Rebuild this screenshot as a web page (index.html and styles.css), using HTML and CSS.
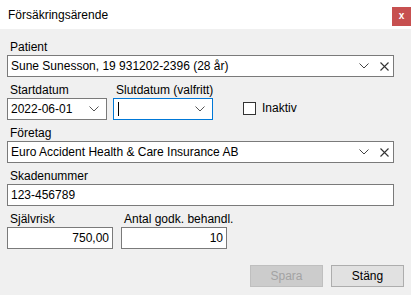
FILE: index.html
```html
<!DOCTYPE html>
<html lang="sv">

<head>
    <meta charset="UTF-8">
    <title>Försäkringsärende</title>
    <link rel="stylesheet" href="styles.css">
</head>

<body>
    <div class="window">
        <div class="titlebar">
            <span class="title">Försäkringsärende</span>
            <div class="close">x</div>
        </div>

        <div class="form">
            <div class="field">
                <label>Patient</label>
                <div class="box combo">
                    <span class="value">Sune Sunesson, 19 931202-2396 (28 år)</span>
                    <svg class="chev" width="10" height="6" viewBox="0 0 10 6"><path d="M0.5 0.5 L5 5 L9.5 0.5" fill="none" stroke="#444" stroke-width="1"/></svg>
                    <svg class="clear" width="9" height="9" viewBox="0 0 9 9"><path d="M0.5 0.5 L8.5 8.5 M8.5 0.5 L0.5 8.5" fill="none" stroke="#333" stroke-width="1.1"/></svg>
                </div>
            </div>

            <div class="row">
                <div class="field date">
                    <label>Startdatum</label>
                    <div class="box combo">
                        <span class="value">2022-06-01</span>
                        <svg class="chev" width="10" height="6" viewBox="0 0 10 6"><path d="M0.5 0.5 L5 5 L9.5 0.5" fill="none" stroke="#555" stroke-width="1"/></svg>
                    </div>
                </div>
                <div class="field date">
                    <label>Slutdatum (valfritt)</label>
                    <div class="box combo focus">
                        <span class="value"><span class="caret"></span></span>
                        <svg class="chev" width="10" height="6" viewBox="0 0 10 6"><path d="M0.5 0.5 L5 5 L9.5 0.5" fill="none" stroke="#555" stroke-width="1"/></svg>
                    </div>
                </div>
                <div class="check">
                    <span class="checkbox"></span>
                    <span>Inaktiv</span>
                </div>
            </div>

            <div class="field">
                <label>Företag</label>
                <div class="box combo">
                    <span class="value">Euro Accident Health &amp; Care Insurance AB</span>
                    <svg class="chev" width="10" height="6" viewBox="0 0 10 6"><path d="M0.5 0.5 L5 5 L9.5 0.5" fill="none" stroke="#444" stroke-width="1"/></svg>
                    <svg class="clear" width="9" height="9" viewBox="0 0 9 9"><path d="M0.5 0.5 L8.5 8.5 M8.5 0.5 L0.5 8.5" fill="none" stroke="#333" stroke-width="1.1"/></svg>
                </div>
            </div>

            <div class="field">
                <label>Skadenummer</label>
                <div class="box">
                    <span class="value">123-456789</span>
                </div>
            </div>

            <div class="row wide-gap">
                <div class="field num">
                    <label>Självrisk</label>
                    <div class="box right">
                        <span class="value">750,00</span>
                    </div>
                </div>
                <div class="field num">
                    <label>Antal godk. behandl.</label>
                    <div class="box right">
                        <span class="value">10</span>
                    </div>
                </div>
            </div>
        </div>

        <div class="buttons">
            <button class="btn" disabled>Spara</button>
            <button class="btn">Stäng</button>
        </div>
    </div>
</body>

</html>
```

FILE: styles.css
```css
body {
    margin: 0;
    padding: 0;
    background-color: #f0f0f0;
    font-family: "Liberation Sans", Arial, sans-serif;
    font-size: 12px;
    color: #000;
    overflow: hidden;
}

.window {
    width: 411px;
    height: 295px;
}

.titlebar {
    height: 29px;
    background-color: #fff;
    display: flex;
    justify-content: space-between;
    align-items: center;
    padding-left: 8px;
}

.title {
    font-size: 12px;
    line-height: 16px;
}

.close {
    align-self: flex-start;
    margin-top: 7px;
    width: 19px;
    height: 19px;
    background-color: #c75050;
    color: #fff;
    font-weight: bold;
    font-size: 10px;
    line-height: 17px;
    text-align: center;
}

.form {
    display: flex;
    flex-direction: column;
    gap: 6px;
    padding: 11px 17px 0 7px;
}

.field {
    display: flex;
    flex-direction: column;
}

.field label {
    height: 15px;
    line-height: 15px;
    padding-left: 3px;
    white-space: nowrap;
}

.box {
    height: 22px;
    box-sizing: border-box;
    border: 1px solid #7a7a7a;
    background-color: #fff;
    display: flex;
    align-items: center;
    padding: 0 3px;
}

.box .value {
    flex: 1;
    white-space: nowrap;
    overflow: hidden;
    line-height: 18px;
    display: flex;
    align-items: center;
}

.box.right .value {
    justify-content: flex-end;
}

.box.focus {
    border-color: #0078d7;
}

.caret {
    display: inline-block;
    width: 1px;
    height: 14px;
    margin-left: 1px;
    background-color: #000;
}

.chev {
    margin-right: 4px;
}

.clear {
    margin-left: 7px;
    margin-right: 1px;
}

.row {
    display: flex;
    gap: 6px;
}

.row.wide-gap {
    gap: 8px;
}

.date {
    width: 100px;
}

.num {
    width: 106px;
}

.check {
    display: flex;
    align-items: center;
    gap: 6px;
    margin-left: 24px;
    padding-top: 13px;
}

.checkbox {
    width: 13px;
    height: 13px;
    box-sizing: border-box;
    border: 1px solid #333;
    background-color: #fff;
}

.buttons {
    display: flex;
    justify-content: flex-end;
    gap: 8px;
    padding: 16px 7px 0 0;
}

.btn {
    width: 73px;
    height: 22px;
    box-sizing: border-box;
    font-family: inherit;
    font-size: 12px;
    background-color: #e1e1e1;
    border: 1px solid #adadad;
    color: #000;
    padding: 0;
}

.btn:disabled {
    background-color: #cccccc;
    border-color: #bfbfbf;
    color: #a3a3a3;
}
```
